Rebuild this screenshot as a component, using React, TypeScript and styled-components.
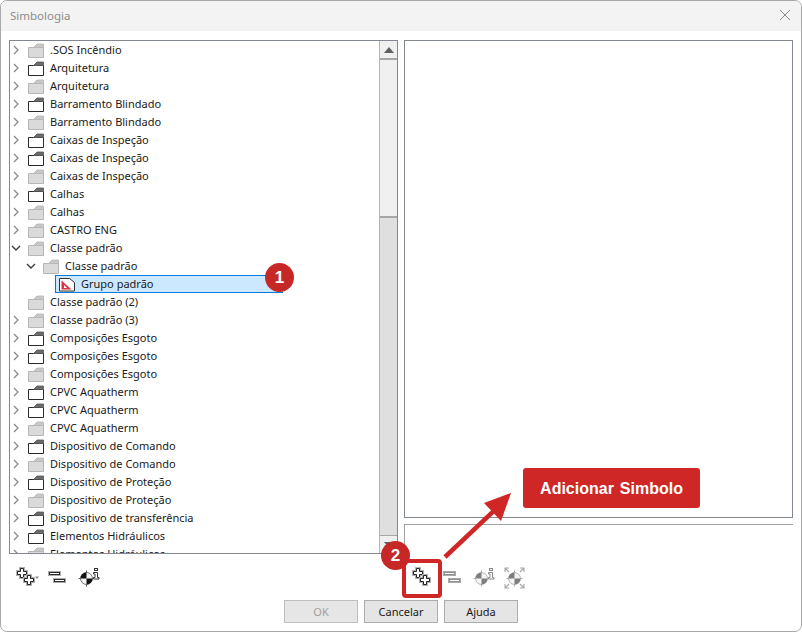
import React from "react";
import styled, { createGlobalStyle } from "styled-components";

const Global = createGlobalStyle`
  html, body { margin: 0; padding: 0; background: #fff; }
  body { width: 802px; height: 632px; overflow: hidden; font-family: "Noto Sans", "Open Sans", sans-serif; }
`;

const Window = styled.div`
  position: relative;
  width: 802px;
  height: 632px;
  box-sizing: border-box;
  border: 1px solid #a9a9a9;
  border-radius: 7px;
  background: #fff;
  overflow: hidden;
`;
const TitleBar = styled.div`
  height: 30px;
  box-sizing: border-box;
  background: #f3f3f3;
  display: flex;
  align-items: center;
  justify-content: space-between;
  padding: 0 9px 2px 9px;
  color: #8b8b8b;
  font-size: 11.5px;
`;
const CloseButton = styled.div`
  width: 14px;
  height: 14px;
  display: flex;
`;
const Panels = styled.div`
  display: grid;
  grid-template-columns: 389px 389px;
  column-gap: 6px;
  height: 521px;
  margin: 9px 0 0 8px;
`;
const TreePanel = styled.div`
  height: 514px;
  box-sizing: border-box;
  border: 1px solid #828790;
  display: flex;
  overflow: hidden;
`;
const Tree = styled.div`
  flex: 1;
  min-width: 0;
  overflow: hidden;
`;
const Row = styled.div<{ $level: number }>`
  height: 18px;
  display: flex;
  align-items: center;
  padding-left: ${(p) => p.$level * 15}px;
  font-size: 11px;
  color: #1a1a1a;
  white-space: nowrap;
`;
const Toggle = styled.span`
  width: 18px;
  height: 18px;
  box-sizing: border-box;
  padding-left: 1px;
  display: flex;
  align-items: center;
  flex: none;
`;
const RowIcon = styled.span`
  width: 16px;
  height: 15px;
  display: flex;
  flex: none;
`;
const Label = styled.span`
  margin-left: 6px;
  line-height: 18px;
`;
const SelectedNode = styled.div`
  flex: 1;
  height: 18px;
  box-sizing: border-box;
  margin-left: 45px;
  padding-left: 3px;
  display: flex;
  align-items: center;
  background: #cce8ff;
  border: 1px solid #0078d7;
  border-right: none;
  margin-right: 96px;
`;
const ScrollBar = styled.div`
  width: 17px;
  flex: none;
  display: flex;
  flex-direction: column;
  background: #dfdfdf;
  border-left: 1px solid #b5b5b5;
`;
const ScrollButton = styled.div`
  height: 17px;
  flex: none;
  background: #f0f0f0;
  display: flex;
  align-items: center;
  justify-content: center;
`;
const ScrollThumb = styled.div`
  height: 160px;
  flex: none;
  box-sizing: border-box;
  background: #f0f0f0;
  border-top: 2px solid #a6a6a6;
  border-bottom: 2px solid #a6a6a6;
`;
const ScrollTrack = styled.div`
  flex: 1;
  border-bottom: 1px solid #a6a6a6;
`;
const RightColumn = styled.div`
  display: flex;
  flex-direction: column;
  gap: 6px;
`;
const Preview = styled.div`
  height: 478px;
  flex: none;
  box-sizing: border-box;
  border: 1px solid #828790;
`;
const Description = styled.div`
  flex: 1;
  border-top: 1px solid #a0a0a0;
  border-left: 1px solid #a0a0a0;
`;
const Toolbars = styled.div`
  display: grid;
  grid-template-columns: 395px 1fr;
  height: 32px;
  margin-left: 8px;
`;
const ToolGroup = styled.div<{ $left: number }>`
  display: flex;
  align-items: center;
  height: 32px;
  padding-left: ${(p) => p.$left}px;
`;
const ToolIcon = styled.span<{ $w: number; $gap: number }>`
  width: ${(p) => p.$w}px;
  height: 22px;
  margin-right: ${(p) => p.$gap}px;
  display: flex;
  svg { overflow: visible; }
`;
const Footer = styled.div`
  display: flex;
  gap: 6px;
  margin: 7px 0 0 283px;
`;
const Button = styled.button<{ $disabled?: boolean }>`
  width: 74px;
  height: 23px;
  padding: 0;
  border: 1px solid ${(p) => (p.$disabled ? "#bfbfbf" : "#adadad")};
  background: ${(p) => (p.$disabled ? "#e6e6e6" : "#e5e5e5")};
  color: ${(p) => (p.$disabled ? "#a0a0a0" : "#1a1a1a")};
  font-family: "Noto Sans", sans-serif;
  font-size: 11px;
`;
const Badge = styled.div<{ $x: number; $y: number }>`
  position: absolute;
  left: ${(p) => p.$x}px;
  top: ${(p) => p.$y}px;
  width: 29px;
  height: 29px;
  border-radius: 50%;
  background: #c62828;
  color: #fff;
  font: bold 17px/29px "Liberation Sans", Arial, sans-serif;
  text-align: center;
`;
const Highlight = styled.div`
  position: absolute;
  left: 401px;
  top: 558px;
  width: 40px;
  height: 39px;
  box-sizing: border-box;
  border: 4px solid #cf2626;
  border-radius: 4px;
`;
const Callout = styled.div`
  position: absolute;
  left: 522px;
  top: 467px;
  width: 177px;
  height: 40px;
  border-radius: 3px;
  background: #cf2626;
  color: #fff;
  font: bold 16px/41px "Liberation Sans", Arial, sans-serif;
  word-spacing: 1.5px;
  text-align: center;
`;
const ArrowLayer = styled.svg`
  position: absolute;
  left: 440px;
  top: 488px;
`;

const Chevron = ({ open }: { open?: boolean }) =>
  open ? (
    <svg width="10" height="10" viewBox="0 0 10 10">
      <path d="M1 3l4 4 4-4" fill="none" stroke="#3c3c3c" strokeWidth="1.4" />
    </svg>
  ) : (
    <svg width="10" height="10" viewBox="0 0 10 10">
      <path d="M3 1l4 4-4 4" fill="none" stroke="#8a8a8a" strokeWidth="1.3" />
    </svg>
  );

const Folder = ({ dark }: { dark: boolean }) => (
  <svg width="16" height="15" viewBox="0 0 16 15">
    <path d="M0.5 4.5h15v10h-15z" fill={dark ? "#fff" : "#dadada"} stroke={dark ? "#2b2b2b" : "#b6b6b6"} />
    <path d="M5.5 4.5L9 1h6.5v3.5z" fill={dark ? "#6b6b6b" : "#c8c8c8"} stroke={dark ? "#555" : "#b6b6b6"} strokeWidth="0.8" />
  </svg>
);

const SymbolIcon = () => (
  <svg width="16" height="15" viewBox="0 0 16 15">
    <path d="M0.5 1.5h10l5 4v8.5h-15z" fill="#fff" stroke="#333" />
    <path d="M2.5 3.5l10 9h-10z" fill="#e0323a" />
    <path d="M5 8l3 3h-3z" fill="#fff" />
  </svg>
);

const plusPath = (x: number, y: number) =>
  `M${x - 1.5} ${y - 4.5}h3v3h3v3h-3v3h-3v-3h-3v-3h3z`;

const PlusPair = ({ caret }: { caret?: boolean }) => (
  <svg width="22" height="22" viewBox="0 0 22 22">
    {[plusPath(5, 7), plusPath(12, 14)].map((d) => (
      <g key={d}>
        <path d={d} fill="none" stroke="#b0b0b0" strokeWidth="3" />
        <path d={d} fill="#fff" stroke="#222" strokeWidth="1" />
      </g>
    ))}
    {caret && <path d="M18 10.5h4l-2 2.5z" fill="#8a8a8a" />}
  </svg>
);

const MinusPair = ({ off }: { off?: boolean }) => {
  const dark = off ? "#8f8f8f" : "#2b2b2b";
  return (
    <svg width="16" height="22" viewBox="0 0 16 22">
      {[
        [0.5, 6.5, 10],
        [5.5, 13.5, 10],
      ].map(([x, y, w]) => (
        <g key={y}>
          <rect x={x} y={y} width={w} height="2" fill="none" stroke="#aaa" strokeWidth="3" />
          <rect x={x} y={y} width={w} height="2" fill="#fff" stroke={dark} strokeWidth="1" />
        </g>
      ))}
    </svg>
  );
};

const Target = ({ off, mode }: { off?: boolean; mode: "info" | "expand" }) => {
  const dark = off ? "#7d7d7d" : "#111";
  const soft = off ? "#a8a8a8" : "#555";
  const ink = off ? "#8a8a8a" : "#333";
  const cx = mode === "info" ? 7.5 : 10.5;
  const cy = 12.5;
  return (
    <svg width="21" height="22" viewBox="0 0 21 22">
      <path d={`M${cx} ${cy - 8}v16M${cx - 8} ${cy}h16`} stroke={soft} strokeWidth="1" />
      <circle cx={cx} cy={cy} r="6" fill="#f4f4f4" stroke={soft} strokeWidth="0.8" />
      <path d={`M${cx} ${cy}V${cy - 6}A6 6 0 0 0 ${cx - 6} ${cy}z`} fill={dark} />
      <path d={`M${cx} ${cy}V${cy + 6}A6 6 0 0 0 ${cx + 6} ${cy}z`} fill={dark} />
      {mode === "info" ? (
        <>
          <rect x="15.5" y="2.5" width="3" height="2" fill="#fff" stroke={ink} strokeWidth="1" />
          <path d="M14.5 6.5h4v5h1.5v1.5h-5.5v-1.5h1.5v-3.5h-1.5z" fill="#fff" stroke={ink} strokeWidth="1" />
        </>
      ) : (
        <path
          d="M1 6V2h4M1 2l4 4M16 2h4v4M20 2l-4 4M1 18v4h4M1 22l4-4M20 18v4h-4M20 22l-4-4"
          fill="none"
          stroke="#a8a8a8"
          strokeWidth="1.1"
        />
      )}
    </svg>
  );
};

type Item = { label: string; dark?: boolean; level?: number; toggle?: "open" | "closed" | "none" };

const items: Item[] = [
  { label: ".SOS Incêndio" },
  { label: "Arquitetura", dark: true },
  { label: "Arquitetura" },
  { label: "Barramento Blindado", dark: true },
  { label: "Barramento Blindado" },
  { label: "Caixas de Inspeção", dark: true },
  { label: "Caixas de Inspeção", dark: true },
  { label: "Caixas de Inspeção" },
  { label: "Calhas", dark: true },
  { label: "Calhas" },
  { label: "CASTRO ENG" },
  { label: "Classe padrão", toggle: "open" },
  { label: "Classe padrão", toggle: "open", level: 1 },
];
const rest: Item[] = [
  { label: "Classe padrão (2)", toggle: "none" },
  { label: "Classe padrão (3)" },
  { label: "Composições Esgoto", dark: true },
  { label: "Composições Esgoto", dark: true },
  { label: "Composições Esgoto" },
  { label: "CPVC Aquatherm", dark: true },
  { label: "CPVC Aquatherm", dark: true },
  { label: "CPVC Aquatherm" },
  { label: "Dispositivo de Comando", dark: true },
  { label: "Dispositivo de Comando" },
  { label: "Dispositivo de Proteção", dark: true },
  { label: "Dispositivo de Proteção" },
  { label: "Dispositivo de transferência", dark: true },
  { label: "Elementos Hidráulicos", dark: true },
  { label: "Elementos Hidráulicos" },
];

const TreeRow = ({ item }: { item: Item }) => (
  <Row $level={item.level ?? 0}>
    <Toggle>
      {item.toggle !== "none" && <Chevron open={item.toggle === "open"} />}
    </Toggle>
    <RowIcon>
      <Folder dark={!!item.dark} />
    </RowIcon>
    <Label>{item.label}</Label>
  </Row>
);

export default function App() {
  return (
    <>
      <Global />
      <Window>
        <TitleBar>
          <span>Simbologia</span>
          <CloseButton>
            <svg width="14" height="14" viewBox="0 0 14 14">
              <path d="M2 2l10 10M12 2L2 12" stroke="#8c8c8c" strokeWidth="1" />
            </svg>
          </CloseButton>
        </TitleBar>
        <Panels>
          <TreePanel>
            <Tree>
              {items.map((it, i) => (
                <TreeRow key={i} item={it} />
              ))}
              <Row $level={0}>
                <SelectedNode>
                  <RowIcon>
                    <SymbolIcon />
                  </RowIcon>
                  <Label>Grupo padrão</Label>
                </SelectedNode>
              </Row>
              {rest.map((it, i) => (
                <TreeRow key={i} item={it} />
              ))}
            </Tree>
            <ScrollBar>
              <ScrollButton>
                <svg width="10" height="6" viewBox="0 0 10 6">
                  <path d="M0 6l5-6 5 6z" fill="#606060" />
                </svg>
              </ScrollButton>
              <ScrollThumb />
              <ScrollTrack />
              <ScrollButton>
                <svg width="10" height="6" viewBox="0 0 10 6">
                  <path d="M0 0l5 6 5-6z" fill="#606060" />
                </svg>
              </ScrollButton>
            </ScrollBar>
          </TreePanel>
          <RightColumn>
            <Preview />
            <Description />
          </RightColumn>
        </Panels>
        <Toolbars>
          <ToolGroup $left={8}>
            <ToolIcon $w={22} $gap={10}>
              <PlusPair caret />
            </ToolIcon>
            <ToolIcon $w={16} $gap={14}>
              <MinusPair />
            </ToolIcon>
            <ToolIcon $w={21} $gap={0}>
              <Target mode="info" />
            </ToolIcon>
          </ToolGroup>
          <ToolGroup $left={9}>
            <ToolIcon $w={22} $gap={9}>
              <PlusPair />
            </ToolIcon>
            <ToolIcon $w={16} $gap={14}>
              <MinusPair off />
            </ToolIcon>
            <ToolIcon $w={21} $gap={9}>
              <Target off mode="info" />
            </ToolIcon>
            <ToolIcon $w={21} $gap={0}>
              <Target off mode="expand" />
            </ToolIcon>
          </ToolGroup>
        </Toolbars>
        <Footer>
          <Button $disabled>OK</Button>
          <Button>Cancelar</Button>
          <Button>Ajuda</Button>
        </Footer>
        <Badge $x={264} $y={262}>1</Badge>
        <ArrowLayer width="75" height="75" viewBox="0 0 75 75">
          <path d="M4 68L58 17" stroke="#cf2626" strokeWidth="4.5" fill="none" />
          <path d="M70 4L60 32L43 14z" fill="#cf2626" />
        </ArrowLayer>
        <Highlight />
        <Badge $x={380} $y={540}>2</Badge>
        <Callout>Adicionar Simbolo</Callout>
      </Window>
    </>
  );
}
